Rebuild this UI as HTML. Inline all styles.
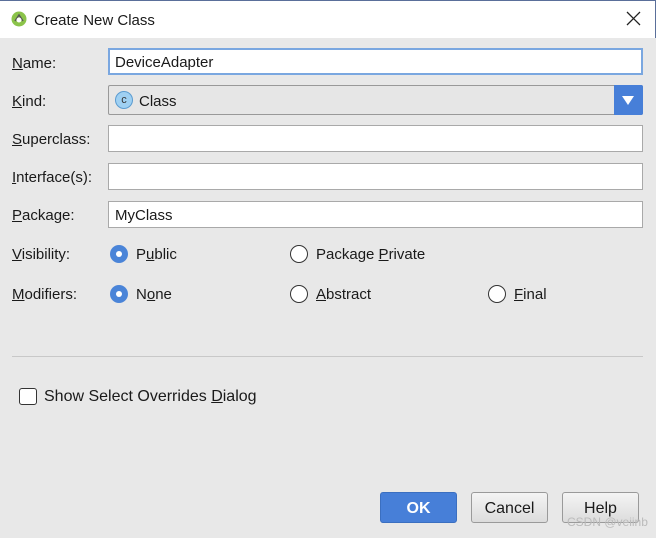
<!DOCTYPE html><html><head><style>
*{box-sizing:border-box;margin:0;padding:0}
body{width:656px;height:538px;background:#e8e8e8;font-family:"Liberation Sans","Noto Sans CJK SC",sans-serif;font-size:15px;color:#1a1a1a;position:relative;overflow:hidden}
.a{position:absolute}
.title{left:0;top:0;width:656px;height:38px;background:#fff;border-top:1px solid #5a6f9a;border-right:1px solid #5a6f9a}
.lbl{left:12px}
.inp{left:108px;width:535px;height:27px;background:#fff;border:1px solid #a9a9a9;padding:5px 6px}
u{text-decoration:underline}
.r{width:18px;height:18px;border-radius:50%;border:1.5px solid #333;background:#fff}
.rs{border:none;background:#4a84d8}
.rs:after{content:"";position:absolute;left:6px;top:6px;width:6px;height:6px;border-radius:50%;background:#fff}
.btn{top:492px;width:77px;height:31px;border:1px solid #9a9a9a;border-radius:3px;background:linear-gradient(#f4f4f4,#dcdcdc);text-align:center;line-height:31px;font-size:16px}
</style></head><body>
<div class="a title"></div>
<svg class="a" style="left:11px;top:11px" width="16" height="16" viewBox="0 0 16 16"><circle cx="8" cy="8" r="7.5" fill="#8bc34a"/><path d="M4 10 L8 4 L12 10" stroke="#555" stroke-width="1.5" fill="none"/><circle cx="8" cy="9" r="2.5" fill="#fff"/></svg>
<div class="a" style="left:34px;top:12px;font-size:15px">Create New Class</div>
<svg class="a" style="left:626px;top:11px" width="15" height="15"><path d="M1 1L14 14M14 1L1 14" stroke="#222" stroke-width="1.3"/></svg>
<div class="a lbl" style="top:55px"><u>N</u>ame:</div>
<div class="a inp" style="top:48px;height:27px;border:2px solid #7aa7e0;padding:4px 5px">DeviceAdapter</div>
<div class="a lbl" style="top:93px"><u>K</u>ind:</div>
<div class="a" style="left:108px;top:85px;width:535px;height:30px;border:1px solid #999;border-radius:2px;background:#e6e6e6"></div>
<div class="a" style="left:614px;top:85px;width:29px;height:30px;background:#477fd8;border-radius:0 2px 2px 0"></div>
<svg class="a" style="left:622px;top:96px" width="12" height="9"><path d="M0 0H12L6 9Z" fill="#fff"/></svg>
<div class="a" style="left:115px;top:91px;width:18px;height:18px;border-radius:50%;background:#9fd0f2;border:1px solid #5a9bd0;font-size:11px;line-height:16px;text-align:center;color:#333">c</div>
<div class="a" style="left:139px;top:93px">Class</div>
<div class="a lbl" style="top:131px"><u>S</u>uperclass:</div>
<div class="a inp" style="top:125px"></div>
<div class="a lbl" style="top:169px"><u>I</u>nterface(s):</div>
<div class="a inp" style="top:163px"></div>
<div class="a lbl" style="top:207px"><u>P</u>ackage:</div>
<div class="a inp" style="top:201px">MyClass</div>
<div class="a lbl" style="top:246px"><u>V</u>isibility:</div>
<div class="a r rs" style="left:110px;top:245px"></div><div class="a" style="left:136px;top:246px">P<u>u</u>blic</div>
<div class="a r" style="left:290px;top:245px"></div><div class="a" style="left:316px;top:246px">Package <u>P</u>rivate</div>
<div class="a lbl" style="top:286px"><u>M</u>odifiers:</div>
<div class="a r rs" style="left:110px;top:285px"></div><div class="a" style="left:136px;top:286px">N<u>o</u>ne</div>
<div class="a r" style="left:290px;top:285px"></div><div class="a" style="left:316px;top:286px"><u>A</u>bstract</div>
<div class="a r" style="left:488px;top:285px"></div><div class="a" style="left:514px;top:286px"><u>F</u>inal</div>
<div class="a" style="left:12px;top:356px;width:631px;height:1px;background:#c8c8c8"></div>
<div class="a" style="left:19px;top:388px;width:18px;height:17px;border:1.3px solid #333;border-radius:3px;background:#fff"></div>
<div class="a" style="left:44px;top:388px;font-size:16px">Show Select Overrides <u>D</u>ialog</div>
<div class="a btn" style="left:380px;background:#477fd8;border-color:#3b6fc0;color:#fff;font-weight:bold">OK</div>
<div class="a btn" style="left:471px">Cancel</div>
<div class="a btn" style="left:562px">Help</div>
<div class="a" style="left:567px;top:515px;font-size:12px;color:#bbb">CSDN @veiinb</div>
</body></html>
